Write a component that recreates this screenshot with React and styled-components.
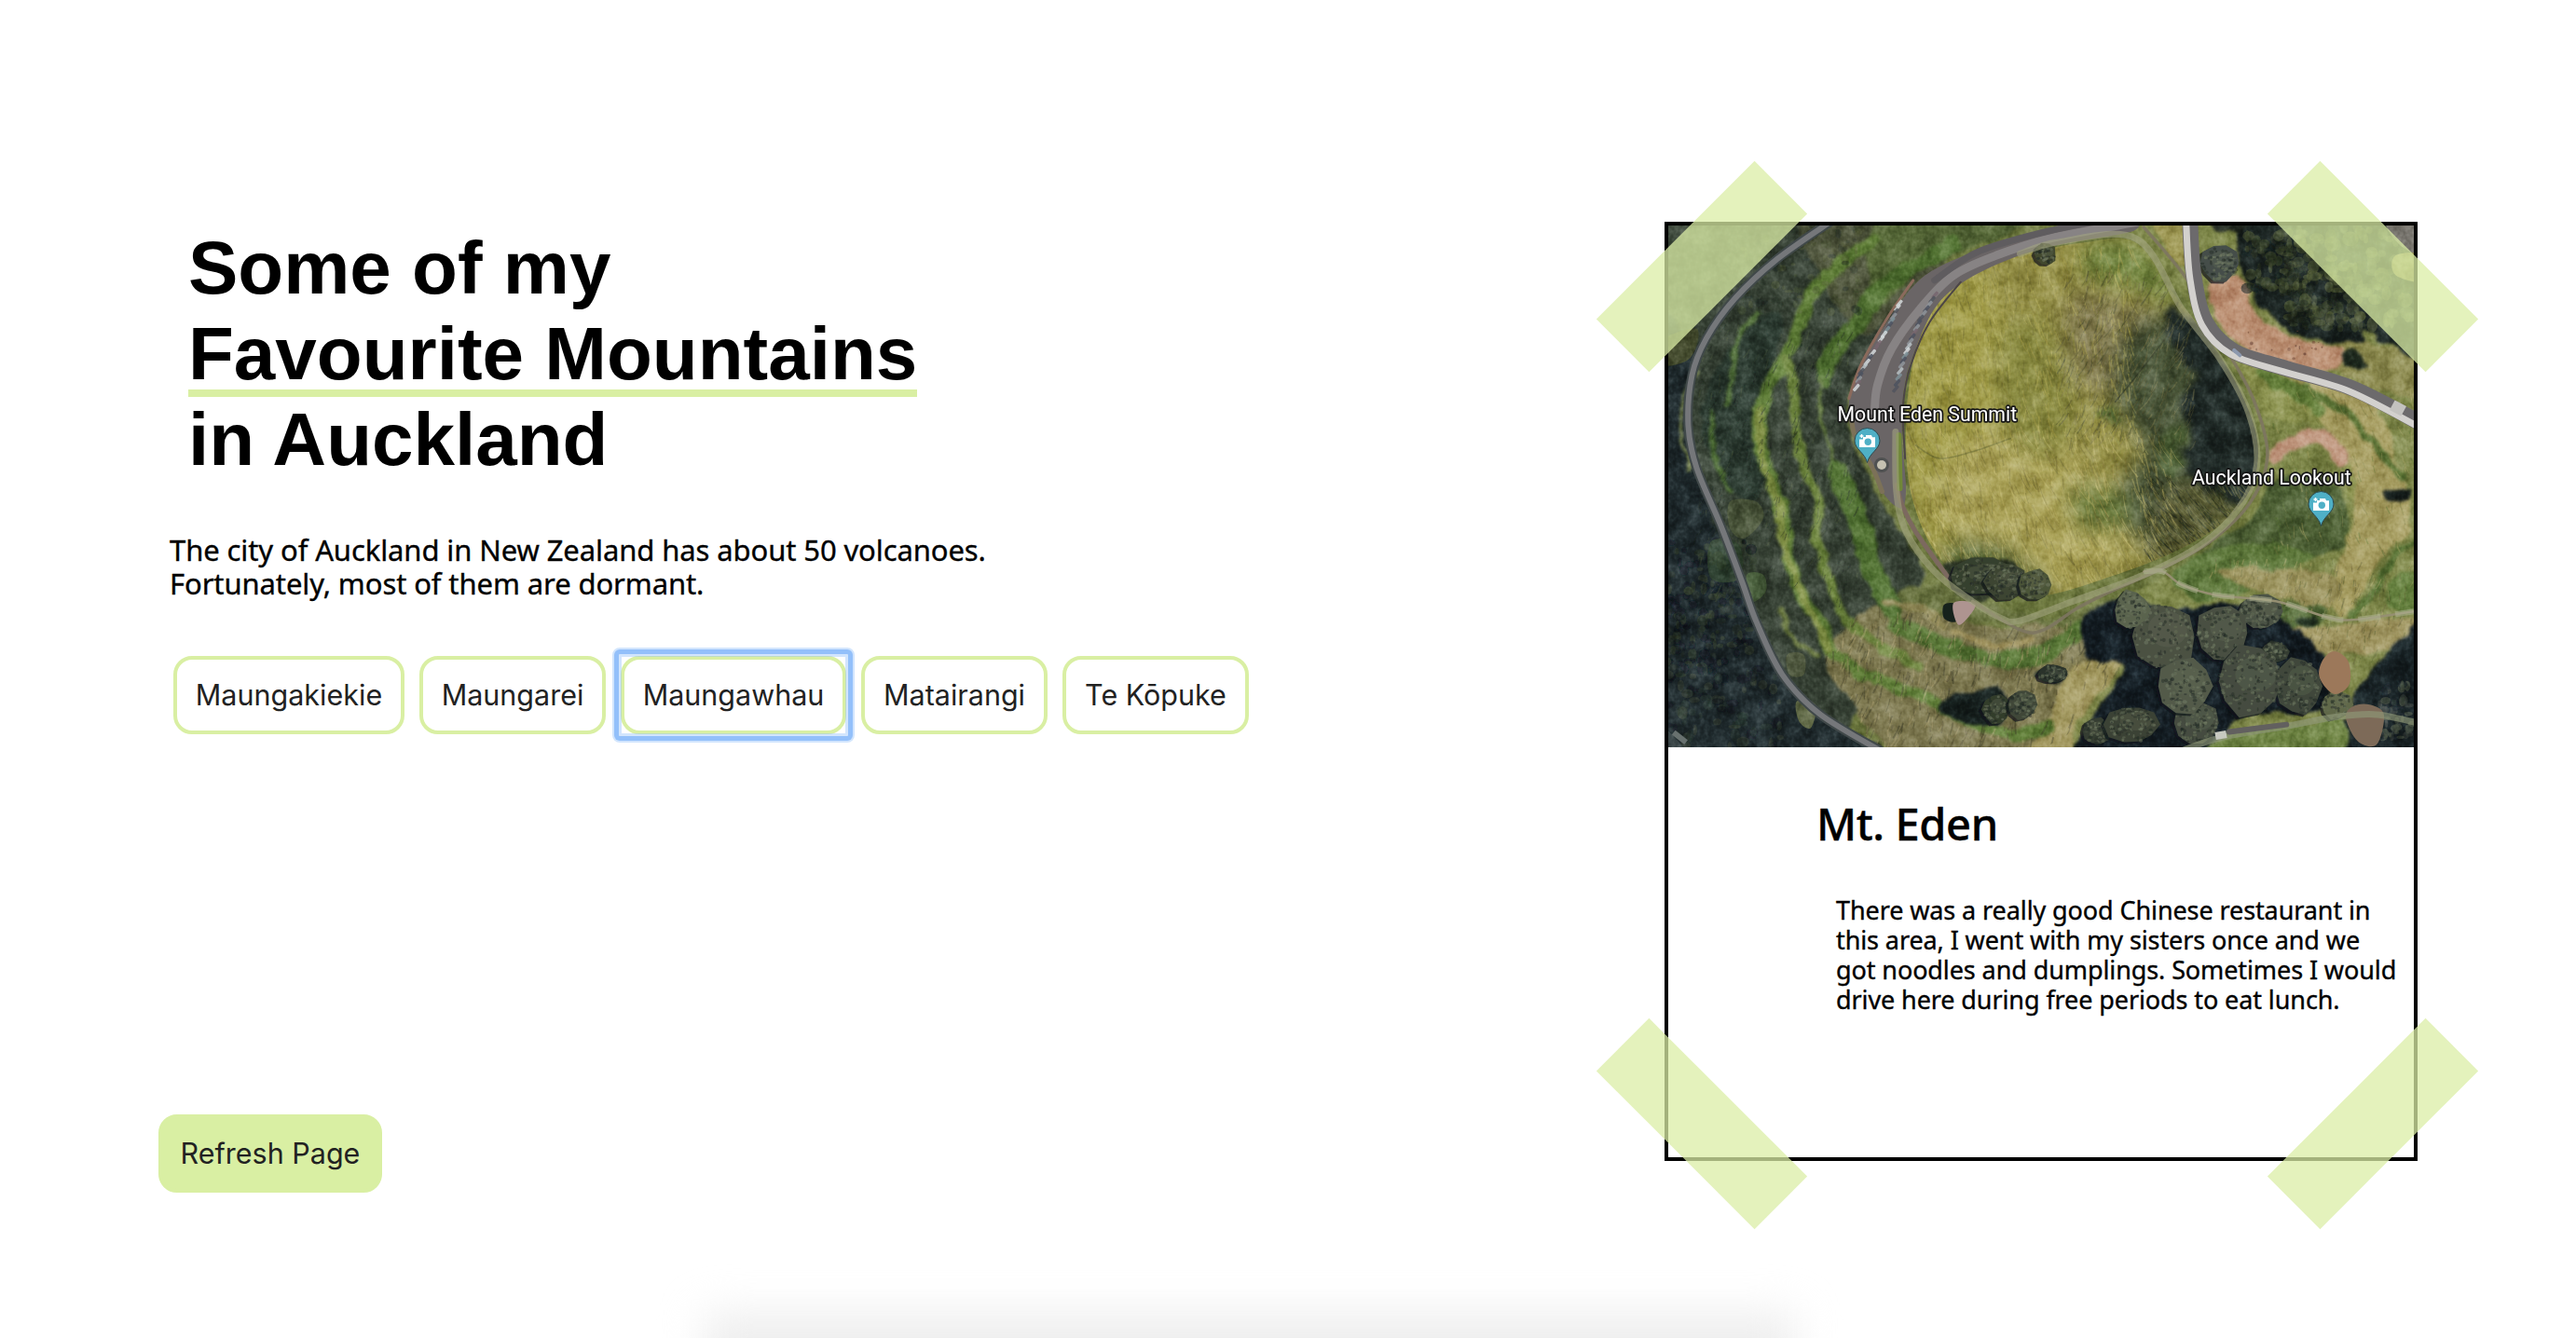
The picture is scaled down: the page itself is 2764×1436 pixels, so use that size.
import React from "react";
import styled, { createGlobalStyle, css } from "styled-components";

const GlobalStyle = createGlobalStyle`
  *, *::before, *::after { box-sizing: border-box; }
  body { margin: 0; background: #fff; color: #000; }
  h1, h2, p { margin: 0; }
`;

const GREEN = "#d9efa3";

const Page = styled.main`
  position: relative;
  display: flex;
  justify-content: space-between;
  align-items: flex-start;
  height: 1436px;
  padding: 238px 170px 0;
  overflow: hidden;
  font-family: "Noto Sans", "Open Sans", sans-serif;
`;

const Intro = styled.section`
  display: flex;
  flex-direction: column;
  align-items: flex-start;
  padding-top: 4px;
`;

const Heading = styled.h1`
  display: flex;
  flex-direction: column;
  align-items: flex-start;
  margin-left: 32px;
  font: bold 80px/92px "Liberation Sans", Arial, sans-serif;
`;

const HeadingLine = styled.span`
  height: 92px;
  white-space: nowrap;
  ${(p) => p.$underlined && css`border-bottom: 8px solid ${GREEN};`}
`;

const Lead = styled.p`
  margin: 54px 0 0 12px;
  font-size: 31px;
  line-height: 36px;
  letter-spacing: -0.1px;
  white-space: pre-line;
  -webkit-text-stroke: 0.35px #000;
`;

const ButtonRow = styled.div`
  display: flex;
  gap: 16px;
  margin: 60px 0 408px 16px;
`;

const Button = styled.button`
  position: relative;
  width: ${(p) => p.$width}px;
  height: 84px;
  padding: 0;
  border: 4px solid ${GREEN};
  border-radius: 20px;
  background: ${(p) => (p.$filled ? GREEN : "#fff")};
  color: #222;
  font: 30.5px/76px Inter, sans-serif;
  white-space: nowrap;
  ${(p) =>
    p.$focused &&
    css`
      &::after {
        content: "";
        position: absolute;
        inset: -13px;
        border: 2px solid rgba(147, 192, 250, 0.42);
        border-radius: 8px;
        box-shadow: inset 0 0 0 5px #93c0fa, inset 0 0 0 8px rgba(147, 192, 250, 0.42);
      }
    `}
`;

const Card = styled.article`
  position: relative;
  width: 808px;
  height: 1008px;
  border: 4px solid #000;
  background: #fff;
`;

const PhotoFrame = styled.div`
  width: 800px;
  height: 560px;
  overflow: hidden;
`;

const Photo = styled.svg`
  display: block;
  width: 800px;
  height: 560px;
`;

const CardTitle = styled.h2`
  margin: 52px 0 0 159px;
  font-size: 47px;
  font-weight: 500;
  line-height: 60px;
  letter-spacing: -0.4px;
  -webkit-text-stroke: 0.4px #000;
`;

const CardText = styled.p`
  margin: 47px 0 0 180px;
  font-size: 27px;
  line-height: 32px;
  letter-spacing: -0.1px;
  white-space: pre-line;
  -webkit-text-stroke: 0.35px #000;
`;

const Tape = styled.span`
  position: absolute;
  ${(p) => (p.$top ? "top: 4px;" : "bottom: -4px;")}
  ${(p) => (p.$left ? "left: -84px;" : "right: -76px;")}
  width: 240px;
  height: 80px;
  background: #dbeea5;
  opacity: 0.75;
  transform: rotate(${(p) => (p.$top === p.$left ? -45 : 45)}deg);
`;

const DockShadow = styled.div`
  position: absolute;
  left: 756px;
  top: 1409px;
  width: 1170px;
  height: 200px;
  border-radius: 10px;
  background: #eeeeee;
  filter: blur(22px);
`;

/* ---------- aerial photograph ---------- */

const SX = 0.5102;
const SY = 0.3571;
const points = (s) =>
  s.split(" ").map((p) => {
    const [x, y] = p.split(",").map(Number);
    return [x * SX, y * SY];
  });

const curve = (s, closed) => {
  const p = points(s);
  const n = p.length;
  const at = (i) => (closed ? p[(i + n) % n] : p[Math.max(0, Math.min(n - 1, i))]);
  let d = `M${p[0][0].toFixed(1)} ${p[0][1].toFixed(1)}`;
  for (let i = 0; i < (closed ? n : n - 1); i++) {
    const [a, b, c, e] = [at(i - 1), at(i), at(i + 1), at(i + 2)];
    const v = [
      b[0] + (c[0] - a[0]) / 6, b[1] + (c[1] - a[1]) / 6,
      c[0] - (e[0] - b[0]) / 6, c[1] - (e[1] - b[1]) / 6, c[0], c[1],
    ].map((k) => k.toFixed(1));
    d += `C${v.join(" ")}`;
  }
  return closed ? d + "Z" : d;
};

const Area = ({ at, ...rest }) => <path d={curve(at, true)} {...rest} />;
const Line = ({ at, w = 4, c, ...rest }) => (
  <path d={curve(at)} fill="none" stroke={c} strokeWidth={w} strokeLinecap="round" strokeLinejoin="round" {...rest} />
);

const random = (seed) => () => {
  seed = (seed * 16807) % 2147483647;
  return seed / 2147483647;
};
const pick = (r, list) => list[Math.floor(r() * list.length)];

const Specks = ({ seed, n, box, size, colors, opacity = 0.6 }) => {
  const r = random(seed);
  const [x, y, w, h] = box;
  return Array.from({ length: n }, (_, i) => (
    <ellipse
      key={i}
      cx={((x + r() * w) * SX).toFixed(1)}
      cy={((y + r() * h) * SY).toFixed(1)}
      rx={(size * (0.4 + r())).toFixed(1)}
      ry={(size * (0.4 + r())).toFixed(1)}
      fill={pick(r, colors)}
      opacity={opacity}
    />
  ));
};

const Blades = ({ seed, n, box, lean, length, colors, w = 1, opacity = 0.45 }) => {
  const r = random(seed);
  const [x, y, bw, bh] = box;
  return Array.from({ length: n }, (_, i) => {
    const px = (x + r() * bw) * SX;
    const py = (y + r() * bh) * SY;
    const l = length * (0.4 + r());
    const k = (lean + (r() - 0.5) * 0.7) * l;
    return (
      <path
        key={i}
        d={`M${px.toFixed(1)} ${py.toFixed(1)}q${(k * 0.3).toFixed(1)} ${(l / 2).toFixed(1)} ${k.toFixed(1)} ${l.toFixed(1)}`}
        stroke={pick(r, colors)}
        strokeWidth={w * (0.6 + r())}
        fill="none"
        opacity={opacity}
      />
    );
  });
};

const CROWNS = [
  [660, 1055, 36, 20, "#363f2d"], [710, 1070, 24, 20, "#3d4532"], [770, 1080, 17, 17, "#4c5439"],
  [900, 1520, 16, 15, "#343c30"], [975, 1500, 28, 21, "#3b4235"], [1110, 1495, 26, 26, "#444c3f"],
  [1040, 1235, 35, 38, "#4b5143"], [975, 1155, 19, 21, "#5a634e"], [1245, 1160, 25, 19, "#4b5245"],
  [1275, 1280, 15, 12, "#363e33"], [1165, 1225, 29, 30, "#495042"], [1325, 1385, 25, 32, "#3f473b"],
  [1225, 1370, 37, 38, "#454c3f"], [1085, 1385, 29, 30, "#525a4a"], [1405, 1440, 17, 16, "#606848"],
  [808, 1348, 17, 10, "#2a332b"], [690, 1455, 15, 17, "#333c2c"], [745, 1440, 15, 17, "#3f4739"],
  [1160, 115, 21, 20, "#454e48"], [793, 85, 12, 12, "#42482f"],
];

const Crowns = () => {
  const r = random(97);
  return CROWNS.map(([x, y, rx, ry, fill], i) => {
    const cx = x * SX;
    const cy = y * SY;
    const rim = Array.from({ length: 10 }, (_, k) => {
      const a = (k / 10) * Math.PI * 2;
      const q = 0.88 + r() * 0.22;
      return `${(cx + Math.cos(a) * rx * q).toFixed(1)},${(cy + Math.sin(a) * ry * q).toFixed(1)}`;
    }).join(" ");
    return (
      <g key={i}>
        <polygon points={rim} fill="#0e161a" transform="translate(-3 2)" opacity="0.7" />
        <polygon points={rim} fill={fill} />
        <ellipse cx={cx + rx * 0.15} cy={cy - ry * 0.2} rx={rx * 0.6} ry={ry * 0.5} fill="#6d745b" opacity="0.25" />
        {Array.from({ length: Math.round(rx * 3.6) }, (_, k) => {
          const a = r() * 6.28;
          const q = Math.sqrt(r()) * 0.9;
          return (
            <ellipse
              key={k}
              cx={(cx + Math.cos(a) * q * rx).toFixed(1)}
              cy={(cy + Math.sin(a) * q * ry).toFixed(1)}
              rx={0.8 + r() * 1.8}
              ry={0.8 + r() * 1.4}
              fill={pick(r, ["#1d2622", "#747d66", "#252d28", "#666f58"])}
              opacity="0.5"
            />
          );
        })}
      </g>
    );
  });
};

const Cars = () => {
  const r = random(31);
  const rows = [points("485,235 465,300 435,370 405,440 392,500"), points("560,210 530,280 508,350 490,420 474,510")];
  return rows.flatMap((row, j) =>
    Array.from({ length: 20 }, (_, i) => {
      const t = (i / 20) * (row.length - 1);
      const k = Math.floor(t);
      const f = t - k;
      const x = row[k][0] * (1 - f) + row[k + 1][0] * f;
      const y = row[k][1] * (1 - f) + row[k + 1][1] * f;
      return (
        <rect
          key={`${j}-${i}`}
          x={x - 4} y={y - 1.5} width="9" height="3.4" rx="1"
          transform={`rotate(-50 ${x} ${y})`}
          fill={pick(r, ["#d5dadd", "#8f959b", "#50555d", "#7d9098", "#b9c2c6", "#4c5260", "#77666e"])}
          opacity="0.85"
        />
      );
    })
  );
};

const Pin = ({ x, y }) => (
  <g transform={`translate(${x} ${y})`}>
    <path d="M0 23.5C-2.5 13-13.5 9-13.5 0a13.5 13.5 0 0 1 27 0C13.5 9 2.5 13 0 23.5Z" fill="#4fb0c6" stroke="#2d4a50" strokeWidth="1" />
    <path d="M-8.5-1.500H-4.500V-4H-1.500V-6H4.500L5.500-3.800H8.500V7H-8.500Z" fill="#fff" />
    <path d="M-6-7v4M-8-5h4" stroke="#fff" strokeWidth="1.5" />
    <circle cx=".8" cy="1.200" r="3.700" fill="#4fb0c6" />
  </g>
);

const Label = styled.text`
  font: 21.3px Roboto, sans-serif;
  fill: #fff;
  stroke: #161616;
  stroke-width: 3.4px;
  stroke-linejoin: round;
  paint-order: stroke;
`;

const Texture = styled.rect`
  mix-blend-mode: soft-light;
  opacity: ${(p) => p.$strength};
`;

const Noise = ({ id, freq, seed, gain = 1.6, octaves = 4 }) => (
  <filter id={id} x="0" y="0" width="100%" height="100%" colorInterpolationFilters="sRGB">
    <feTurbulence type="fractalNoise" baseFrequency={freq} numOctaves={octaves} seed={seed} />
    <feColorMatrix
      type="matrix"
      values={`${gain} 0 0 0 ${(1 - gain) / 2} ${gain} 0 0 0 ${(1 - gain) / 2} ${gain} 0 0 0 ${(1 - gain) / 2} 0 0 0 0 1`}
    />
  </filter>
);

const CRATER =
  "555,240 600,165 680,110 780,75 880,50 980,50 1060,200 1150,370 1210,520 1240,660 1225,790 1160,900 1050,990 920,1060 800,1110 700,1110 600,1040 545,940 510,800 500,650 505,500 525,350";
const OUTER_ROAD =
  "345,-15 230,100 140,220 80,340 50,450 42,600 60,730 110,900 155,1070 185,1190 240,1350 320,1470 460,1590";
const RIM_PATH =
  "478,620 480,800 500,920 560,1040 640,1130 700,1180 740,1188 850,1130 1000,1050 1120,960 1200,850 1238,720 1220,560 1160,400 1080,250 985,40 820,50 740,85";
const EAST_PATH = "1000,1040 1040,1040 1080,1080 1150,1110 1280,1130 1380,1175 1440,1185 1568,1160";
const MAIN_ROAD = "1097,-15 1105,150 1130,290 1190,378 1300,430 1440,490 1590,600";

const AerialPhoto = () => (
  <Photo viewBox="0 0 800 560" role="img" aria-label="Mount Eden from above">
    <defs>
      <filter id="rough" x="-5%" y="-5%" width="110%" height="110%" colorInterpolationFilters="sRGB">
        <feTurbulence type="fractalNoise" baseFrequency="0.05" numOctaves="3" seed="4" />
        <feDisplacementMap in="SourceGraphic" scale="12" xChannelSelector="R" yChannelSelector="G" />
        <feGaussianBlur stdDeviation="1.5" />
      </filter>
      <filter id="soft" x="-20%" y="-20%" width="140%" height="140%">
        <feGaussianBlur stdDeviation="11" />
      </filter>
      <filter id="shade" x="-20%" y="-20%" width="140%" height="140%" colorInterpolationFilters="sRGB">
        <feTurbulence type="fractalNoise" baseFrequency="0.06" numOctaves="3" seed="14" />
        <feDisplacementMap in="SourceGraphic" scale="26" xChannelSelector="R" yChannelSelector="G" />
        <feGaussianBlur stdDeviation="3" />
      </filter>
      <filter id="haze" x="-5%" y="-5%" width="110%" height="110%">
        <feGaussianBlur stdDeviation="0.7" />
      </filter>
      <Noise id="grain" freq="0.045" seed={8} gain={1.9} />
      <Noise id="fine" freq="0.23 0.2" seed={3} gain={1.5} octaves={2} />
      <clipPath id="craterClip"><path d={curve(CRATER, true)} /></clipPath>
      <clipPath id="lowerClip">
        <path d={curve("330,1290 430,1150 560,1170 700,1210 860,1190 960,1300 900,1450 760,1580 460,1580 390,1440", true)} />
      </clipPath>
    </defs>

    <rect width="800" height="560" fill="#6f7a40" />
    <g filter="url(#rough)">
      <Area at="-40,-40 700,-40 560,120 460,300 380,520 400,700 480,900 540,1060 480,1160 600,1230 500,1330 380,1500 420,1620 -40,1620" fill="#374235" />
      <Area at="300,-40 720,-40 580,110 470,260 400,330 330,180" fill="#4e543b" />
      <Area at="420,20 520,-20 760,-20 600,90 520,150 440,230" fill="#596b3a" />
      <Area at="-40,350 50,380 40,620 100,900 150,1060 190,1200 250,1370 330,1480 460,1620 -40,1620" fill="#1f2a2d" />
      <Area at="100,440 170,300 240,260 220,420 190,560 200,780 150,820 100,720 70,600" fill="#2c3b31" />
      <Area at="330,1290 430,1150 560,1170 700,1210 860,1180 960,1300 900,1450 780,1600 500,1600 390,1440" fill="#7f7a51" />
      <Area at="480,1120 560,1080 680,1140 800,1180 900,1140 1000,1100 900,1240 800,1200 640,1190" fill="#68723f" />
      <Area at="850,1330 970,1300 950,1420 870,1600 760,1600 800,1480" fill="#a39960" />
    </g>
    <g filter="url(#rough)" fill="none">
      <Line at="430,45 350,130 300,210 270,320 245,400 215,480 190,570 200,700 225,800 245,900 250,990 275,1100 320,1190 350,1290 430,1360 540,1420 620,1480 720,1530 800,1510" w={14} c="#607e38" />
      <Line at="190,560 200,720 235,850 240,950 265,1060 300,1160 340,1270" w={8} c="#839248" />
      <Line at="250,400 265,520 270,640 290,740 320,850 310,930 335,1040 360,1150 420,1240 520,1320" w={11} c="#6d843e" />
      <Line at="600,60 520,120 440,200 400,290 340,390 330,470" w={18} c="#527232" />
      <Line at="320,470 325,600 350,720" w={4} c="#62783f" />
      <Line at="355,740 390,850 415,960 440,1070 470,1150" w={24} c="#527233" />
      <Line at="480,1200 560,1250 660,1300 780,1290 870,1210" w={18} c="#5c7a39" />
      <Line at="185,270 145,340 130,440 125,540" w={6} c="#53703c" />
      <Line at="90,560 95,680 130,800" w={5} c="#4c6b34" />
      <Line at="240,1150 255,1240 310,1290" w={6} c="#64733c" />
      <Line at="60,440 30,520 30,640 45,740" w={3} c="#717e48" />
      <Line at="600,1225 700,1260 760,1250" w={7} c="#a0935f" />
      <Line at="460,1135 540,1160 580,1210" w={8} c="#928b5a" />
    </g>
    <g filter="url(#haze)">
      <Specks seed={5} n={170} box={[-10, 950, 190, 420]} size={4.5} colors={["#0f1820", "#0d161e", "#39452f", "#27342c", "#404b36"]} opacity={0.5} />
      <Specks seed={9} n={80} box={[-10, 1330, 250, 240]} size={5} colors={["#111a20", "#3d4738", "#2a3732"]} opacity={0.5} />
      <Specks seed={19} n={100} box={[150, 0, 260, 260]} size={3.5} colors={["#2a3329", "#59603a", "#495634", "#222c28"]} opacity={0.35} />
      <Blades seed={21} n={420} box={[60, 280, 340, 850]} lean={-0.4} length={9} colors={["#1c2623", "#4d5a3c", "#28332a"]} opacity={0.38} />
      <g clipPath="url(#lowerClip)">
        <Blades seed={27} n={560} box={[330, 1140, 620, 430]} lean={-0.25} length={11} colors={["#514b32", "#aa9d70", "#3f4029", "#b0a373"]} w={1.3} opacity={0.38} />
      </g>
      <Area at="130,830 185,830 200,880 160,940 130,910" fill="#4b563b" />
      <Area at="165,1050 200,1050 205,1100 175,1130" fill="#4e6340" />
      <Area at="250,1290 285,1290 285,1350 255,1350" fill="#515a3f" />
      <Area at="270,1430 310,1440 300,1510 275,1490" fill="#5f6844" />
      <Area at="90,950 150,960 150,1060 90,1060" fill="#31442e" opacity="0.8" />
      <Area at="-20,350 60,310 45,400 -20,420" fill="#3f472b" />
    </g>

    <g filter="url(#rough)">
      <Area at="990,-20 1600,-20 1600,1600 880,1600 960,1290 880,1180 1060,1040 1200,880 1260,700 1220,500 1130,300" fill="#7f884a" />
      <Area at="1020,-20 1100,-20 1090,120 1050,80" fill="#9e9854" />
      <Area at="1200,410 1330,450 1400,560 1460,700 1500,820 1430,820 1410,620 1300,590 1250,560" fill="#8c9350" />
      <Area at="1300,440 1480,540 1530,700 1560,900 1500,1000 1420,1180 1400,1060 1440,880 1430,700" fill="#a79e62" />
      <Line at="1340,490 1430,570 1500,680 1540,760" w={8} c="#5f7738" />
      <Line at="1250,440 1330,510 1370,560" w={14} c="#66803b" />
      <Line at="1580,950 1530,990 1490,1090 1440,1170" w={8} c="#5c7638" />
      <Area at="1270,770 1400,770 1420,960 1300,1000 1130,1020 1150,950 1230,880" fill="#4f6236" />
      <Area at="1060,1040 1200,960 1360,980 1300,1040 1130,1130" fill="#5e783b" />
      <Area at="1150,1040 1280,1030 1400,1060 1390,1150 1270,1110" fill="#9a925c" />
      <Area at="1210,1210 1400,1200 1568,1180 1568,1260 1400,1290 1250,1270" fill="#a19762" />
      <Area at="1290,1140 1380,1150 1350,1200 1290,1190" fill="#59703d" />
      <Area at="1530,1050 1600,1040 1600,1150 1510,1150" fill="#647f3d" />
      <Area at="1430,340 1568,400 1568,520 1400,430" fill="#8d8b50" />
    </g>
    <g filter="url(#haze)">
      <Blades seed={44} n={330} box={[1140, 1000, 430, 300]} lean={-0.2} length={8} colors={["#6a6640", "#b8ab72", "#596434"]} opacity={0.38} />
      <Blades seed={45} n={170} box={[1270, 480, 300, 500]} lean={0.3} length={10} colors={["#757a42", "#b1a86a", "#5d7637"]} opacity={0.38} />
    </g>

    <path d={curve(CRATER, true)} fill="#969148" />
    <g clipPath="url(#craterClip)">
      <g filter="url(#soft)">
        <Area at="500,200 640,110 700,300 690,600 720,950 600,1050 500,800" fill="#a29d49" />
        <Area at="640,640 820,620 900,800 960,1000 760,1090 620,960 560,800" fill="#aca45a" />
        <Area at="700,320 800,300 860,560 800,700 700,600" fill="#8b8c42" />
        <Area at="880,60 1000,60 1080,230 980,190 880,150" fill="#728540" />
        <Area at="840,220 980,240 1050,300 960,480 860,470" fill="#837b50" />
        <Area at="960,320 1070,270 1180,420 1240,660 1220,820 1140,930 1020,960 930,870 960,760 1000,680 950,560 930,500" fill="#4a5537" />
        <Area at="850,780 960,820 960,900 870,910" fill="#6d7f3f" />
        <Area at="1040,800 1180,780 1140,930 1020,1010" fill="#565932" />
        <Area at="580,960 720,970 800,1130 620,1120" fill="#546635" />
      </g>
      <g filter="url(#shade)">
        <Area at="1065,250 1160,370 1230,520 1275,650 1270,760 1210,840 1130,790 1085,740 1095,640 1080,540 1110,450 1050,350" fill="#1e2825" />
        <Area at="1030,650 1080,600 1080,700 1050,760" fill="#4e6334" opacity="0.8" />
        <ellipse cx="470" cy="203" rx="12" ry="9" fill="#4e6834" opacity="0.8" />
      </g>
      <g filter="url(#haze)">
        <Blades seed={61} n={900} box={[500, 60, 480, 560]} lean={0.15} length={16} colors={["#77753a", "#beb765", "#848140", "#aea551"]} opacity={0.4} />
        <Blades seed={62} n={1000} box={[500, 600, 560, 500]} lean={0.35} length={18} colors={["#7d773e", "#c8bd76", "#928846", "#bab064"]} opacity={0.4} />
        <Blades seed={63} n={450} box={[830, 130, 280, 520]} lean={-0.45} length={13} colors={["#5e5d38", "#858050", "#4a4f31"]} opacity={0.4} />
        <Blades seed={64} n={330} box={[1000, 740, 230, 260]} lean={0.8} length={15} colors={["#232b20", "#747546", "#343d25"]} opacity={0.5} />
        <Line at="1080,265 1040,350 980,460 940,530" w={1.5} c="#383f2a" opacity="0.7" />
        <Line at="520,660 570,700 640,680 720,640" w={1.6} c="#73743a" opacity="0.6" />
      </g>
    </g>

    <g filter="url(#rough)">
      <Area at="1140,170 1205,160 1240,270 1320,340 1415,370 1400,435 1290,420 1210,370 1150,280" fill="#bd9275" />
      <Area at="1268,660 1300,640 1350,608 1400,630 1430,700 1410,725 1375,660 1310,680 1270,715" fill="#bd937a" />
      <Area at="1195,30 1300,-20 1600,-20 1600,385 1510,350 1460,310 1450,355 1340,335 1270,280 1225,190" fill="#1a2321" />
      <Area at="1150,-20 1230,-20 1200,20 1150,15" fill="#232a22" />
      <Area at="1420,390 1450,380 1465,425 1425,420" fill="#1d281d" />
      <Area at="1510,800 1560,790 1550,830 1515,825" fill="#17201e" />
      <Area at="1325,1180 1360,1175 1355,1200 1330,1200" fill="#1e2c1d" />
      <Area at="880,1170 950,1120 1060,1150 1180,1140 1290,1180 1380,1300 1380,1450 1200,1480 1140,1600 860,1600 920,1420 960,1320 880,1290" fill="#131c22" />
      <Area at="1440,1400 1490,1320 1540,1240 1600,1220 1600,1600 1350,1600 1330,1520 1430,1480" fill="#182225" />
      <Area at="570,1430 640,1400 700,1390 710,1490 640,1500 580,1470" fill="#182220" />
      <Area at="770,1350 810,1325 840,1350 810,1375" fill="#202a23" />
      <Area at="590,1010 720,1010 730,1090 640,1130 590,1060" fill="#303928" />
      <Area at="1180,1530 1300,1505 1420,1490 1390,1600 1130,1600" fill="#6b8140" />
    </g>
    <g filter="url(#haze)">
      <Specks seed={71} n={85} box={[1215, 20, 130, 180]} size={5} colors={["#38432a", "#232c20", "#4a5334", "#161f1c"]} />
      <Specks seed={72} n={130} box={[1300, 110, 160, 200]} size={5} colors={["#3d472d", "#242e21", "#525b38", "#1a231d"]} />
      <Specks seed={73} n={130} box={[1320, 0, 240, 300]} size={6} colors={["#48523a", "#2c3729", "#59643c"]} opacity={0.5} />
      <Area at="1510,-20 1600,-20 1600,90 1540,60" fill="#76736c" />
      <Area at="1530,90 1600,90 1600,170 1530,150" fill="#8c8553" />
      <Specks seed={75} n={50} box={[1490, 1370, 80, 170]} size={4} colors={["#3f4a42", "#1a252b", "#56604f"]} />
      <Specks seed={77} n={18} box={[1220, 310, 180, 90]} size={1.4} colors={["#774e3c", "#694637"]} />
      <Area at="-20,1500 40,1590 -20,1590" fill="#3c4a4c" />
    </g>

    <Texture width="800" height="560" filter="url(#grain)" $strength={0.38} />
    <Texture width="800" height="560" filter="url(#fine)" $strength={0.26} />

    <g filter="url(#haze)">
      <Line at={OUTER_ROAD} w={10} c="#41484a" />
      <Line at={OUTER_ROAD} w={6} c="#74777a" />
      <path d={curve("540,150 470,270 405,420 380,530 388,630 430,730 455,810 490,850 500,790 492,640 495,500 515,390 560,250 620,170 720,100 830,55 980,15 960,-30 780,20 660,70", true)} fill="#6b6566" />
      <Line at="515,165 460,280 405,420 380,520" w={3} c="#8b6b5c" />
      <Line at="385,560 392,630 430,730 450,800" w={5} c="#7b7158" />
      <Line at="480,780 492,840 520,920 590,1060" w={5} c="#7b695e" />
      <Line at="615,170 550,290 510,420 494,540 498,700" w={2} c="#4c4546" />
      <Line at="985,-10 800,40 690,90 600,150 530,250 470,370 440,480 434,560" w={9} c="#878384" />
      <Line at="960,-30 790,20 650,80 560,165" w={7} c="#5e5c5f" />
      <Cars />
      <Area at="580,1140 605,1140 605,1190 580,1180" fill="#18201e" />
      <Area at="600,1135 645,1135 635,1170 610,1200" fill="#ae9490" />
      <Line at="485,630 487,790" w={6} c="#6f8739" />
      <circle cx="229" cy="257" r="8" fill="#4f5151" />
      <circle cx="229" cy="257" r="5" fill="#c5c1b1" />
      <Crowns />
      <Line at="1000,5 1090,160 1165,350 1230,520 1260,690 1225,830 1140,950 1040,1030 930,1100 860,1150 790,1215 740,1215 640,1130" w={3.5} c="#7d7660" opacity="0.9" />
      <Line at={RIM_PATH} w={7} c="#a3a682" opacity="0.58" />
      <Line at={EAST_PATH} w={2.5} c="#958f71" />
      <Line at={EAST_PATH} w={6} c="#b0b494" opacity="0.55" strokeDasharray="24 16" strokeLinecap="butt" />
      <Area at="1375,1310 1400,1280 1430,1310 1432,1380 1400,1408 1370,1360" fill="#9c785a" />
      <Area at="1425,1480 1440,1445 1475,1440 1505,1470 1490,1560 1450,1550" fill="#7d6a58" />
      <Line at="1060,1590 1160,1540 1300,1505 1400,1478 1490,1470 1590,1500" w={7} c="#8f9878" opacity="0.65" />
      <Line at="1180,1522 1300,1500" w={6} c="#62605f" />
      <rect x="587" y="543" width="12" height="8" fill="#c7c9c0" transform="rotate(-10 593 547)" />
      <Line at={MAIN_ROAD} w={17} c="#6c6a6c" />
      <Line at={MAIN_ROAD} w={7} c="#d3d1ce" transform="translate(-4 3)" />
      <rect x="776" y="190" width="14" height="12" fill="#c3c2bf" transform="rotate(28 783 196)" />
      <Line at="1190,375 1202,390" w={4} c="#8c98ad" />
    </g>
    <rect x="4" y="546" width="17" height="6" fill="#68716f" transform="rotate(38 12 549)" />

    <Label x="181.5" y="210">Mount Eden Summit</Label>
    <Label x="562" y="278">Auckland Lookout</Label>
    <Pin x={213.5} y={231} />
    <Pin x={700.5} y={299} />
  </Photo>
);

const MOUNTAINS = [
  { name: "Maungakiekie", width: 248 },
  { name: "Maungarei", width: 200 },
  { name: "Maungawhau", width: 242, focused: true },
  { name: "Matairangi", width: 200 },
  { name: "Te Kōpuke", width: 200 },
];

export default function App() {
  return (
    <>
      <GlobalStyle />
      <Page>
        <Intro>
          <Heading>
            <HeadingLine>Some of my</HeadingLine>
            <HeadingLine $underlined>Favourite Mountains</HeadingLine>
            <HeadingLine>in Auckland</HeadingLine>
          </Heading>
          <Lead>
            {"The city of Auckland in New Zealand has about 50 volcanoes.\nFortunately, most of them are dormant."}
          </Lead>
          <ButtonRow>
            {MOUNTAINS.map((m) => (
              <Button key={m.name} $width={m.width} $focused={m.focused}>{m.name}</Button>
            ))}
          </ButtonRow>
          <Button $width={240} $filled>Refresh Page</Button>
        </Intro>
        <Card>
          <PhotoFrame><AerialPhoto /></PhotoFrame>
          <CardTitle>Mt. Eden</CardTitle>
          <CardText>
            {"There was a really good Chinese restaurant in\nthis area, I went with my sisters once and we\ngot noodles and dumplings. Sometimes I would\ndrive here during free periods to eat lunch."}
          </CardText>
          <Tape $top $left />
          <Tape $top $left={false} />
          <Tape $top={false} $left />
          <Tape $top={false} $left={false} />
        </Card>
        <DockShadow />
      </Page>
    </>
  );
}
